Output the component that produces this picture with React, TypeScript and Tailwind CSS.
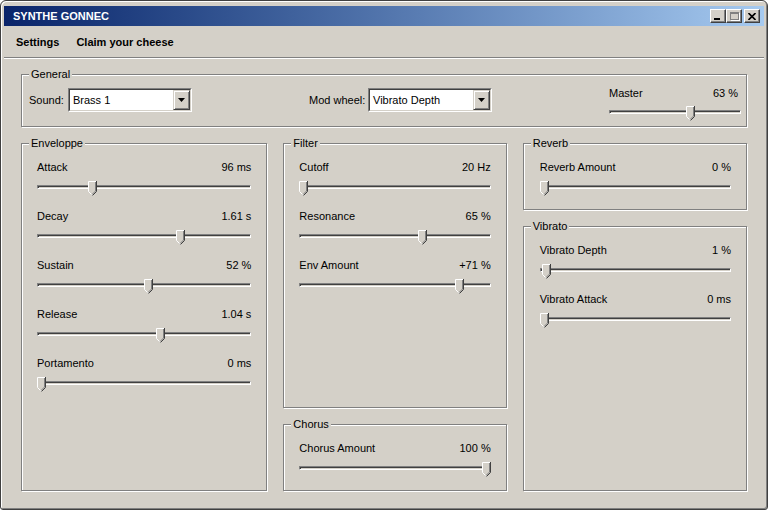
import type { ReactNode } from 'react';

// Win classic palette
const FONT = "font-['Liberation_Sans',Arial,sans-serif]";

type SliderProps = { value: number };

function Slider({ value }: SliderProps) {
  return (
    <div className="relative h-[15px]">
      {/* groove */}
      <div className="absolute left-0 right-0 top-[4px] h-[4px] border border-t-[#808080] border-l-[#808080] border-b-white border-r-white">
        <div className="h-full shadow-[inset_1px_1px_0_#404040]" />
      </div>
      {/* thumb */}
      <svg
        width="9"
        height="15"
        viewBox="0 0 9 15"
        className="absolute top-0"
        style={{ left: `calc((100% - 9px) * ${value})` }}
      >
        <path d="M0 0H9V10.5L4.5 15L0 10.5Z" fill="#d4d0c8" />
        <path d="M0.5 10.5V0.5H8" stroke="#ffffff" fill="none" />
        <path d="M0.5 10.5L4.5 14.5" stroke="#ffffff" fill="none" />
        <path d="M8.5 0V10.5L4.5 14.5" stroke="#404040" fill="none" />
        <path d="M7.5 1V10L4 13.5" stroke="#808080" fill="none" />
      </svg>
    </div>
  );
}

type RowProps = { label: string; text: string; value: number };

function SliderRow({ label, text, value }: RowProps) {
  return (
    <div>
      <div className="flex justify-between h-[13px] leading-[13px] text-[11px]">
        <span>{label}</span>
        <span>{text}</span>
      </div>
      <div className="mt-[7px]">
        <Slider value={value} />
      </div>
    </div>
  );
}

function GroupBox({ title, className, children }: { title: string; className: string; children?: ReactNode }) {
  return (
    <div className={`relative border border-[#808080] shadow-[inset_1px_1px_0_#ffffff,1px_1px_0_#ffffff] ${className}`}>
      <span className="absolute -top-[7px] left-[7px] bg-[#d4d0c8] px-[2px] text-[11px] leading-[13px]">
        {title}
      </span>
      {children}
    </div>
  );
}

function Combo({ value }: { value: string }) {
  return (
    <div className="w-[124px] h-[24px] border border-t-[#808080] border-l-[#808080] border-b-white border-r-white">
      <div className="h-full flex bg-white border border-t-[#404040] border-l-[#404040] border-b-[#d4d0c8] border-r-[#d4d0c8]">
        <span className="flex-1 pl-[3px] text-[11px] leading-[20px]">{value}</span>
        <div className="w-[17px] h-full bg-[#d4d0c8] border border-t-[#d4d0c8] border-l-[#d4d0c8] border-b-[#404040] border-r-[#404040] shadow-[inset_1px_1px_0_#ffffff,inset_-1px_-1px_0_#808080] flex items-center justify-center">
          <svg width="7" height="4" viewBox="0 0 7 4">
            <path d="M0 0H7L3.5 4Z" fill="#000000" />
          </svg>
        </div>
      </div>
    </div>
  );
}

function CapButton({ children, className }: { children: ReactNode; className: string }) {
  return (
    <div
      className={`w-[16px] h-[14px] bg-[#d4d0c8] border border-t-white border-l-white border-b-[#404040] border-r-[#404040] shadow-[inset_-1px_-1px_0_#808080] flex ${className}`}
    >
      {children}
    </div>
  );
}

const envelope = [
  { label: 'Attack', text: '96 ms', value: 0.25 },
  { label: 'Decay', text: '1.61 s', value: 0.675 },
  { label: 'Sustain', text: '52 %', value: 0.52 },
  { label: 'Release', text: '1.04 s', value: 0.58 },
  { label: 'Portamento', text: '0 ms', value: 0 },
];

const filter = [
  { label: 'Cutoff', text: '20 Hz', value: 0 },
  { label: 'Resonance', text: '65 %', value: 0.65 },
  { label: 'Env Amount', text: '+71 %', value: 0.855 },
];

const vibrato = [
  { label: 'Vibrato Depth', text: '1 %', value: 0.01 },
  { label: 'Vibrato Attack', text: '0 ms', value: 0 },
];

export default function App() {
  return (
    <div
      className={`w-[768px] h-[510px] bg-[#d4d0c8] text-black ${FONT} rounded-t-[6px] rounded-b-[3px] border border-[#404040] shadow-[inset_1px_1px_0_#ffffff,inset_-1px_-1px_0_#808080] pt-[5px] px-[3px] pb-[3px] flex flex-col overflow-hidden`}
    >
      {/* Title bar */}
      <div className="h-[20px] shrink-0 bg-gradient-to-r from-[#0a246a] to-[#a6caf0] flex items-center pl-[9px] pr-[4px]">
        <span className="flex-1 text-white font-bold text-[11px] leading-[13px]">SYNTHE GONNEC</span>
        <div className="flex">
          <CapButton className="items-end pl-[3px] pb-[2px]">
            <div className="w-[6px] h-[2px] bg-black" />
          </CapButton>
          <CapButton className="items-center justify-center">
            <div className="w-[9px] h-[8px] border border-t-2 border-[#808080] shadow-[1px_1px_0_#ffffff]" />
          </CapButton>
          <CapButton className="ml-[2px] items-center justify-center">
            <svg width="8" height="7" viewBox="0 0 8 7">
              <path d="M0.5 0L7.5 7M7.5 0L0.5 7" stroke="#000000" strokeWidth="1.6" />
            </svg>
          </CapButton>
        </div>
      </div>

      {/* Menu */}
      <div className="h-[32px] shrink-0 flex items-center gap-[17px] pl-[12px] pt-[2px] text-[11px] font-bold border-b border-[#808080] shadow-[0_1px_0_#ffffff]">
        <span>Settings</span>
        <span>Claim your cheese</span>
      </div>

      {/* Content */}
      <div className="flex-1 pt-[16px] px-[17px]">
        <GroupBox title="General" className="h-[53px] flex items-start pl-[7px]">
          <div className="w-[280px] mt-[13px] flex items-center">
            <span className="w-[39px] text-[11px] whitespace-nowrap">Sound:</span>
            <Combo value="Brass 1" />
          </div>
          <div className="w-[300px] mt-[13px] flex items-center">
            <span className="w-[59px] text-[11px] whitespace-nowrap">Mod wheel:</span>
            <Combo value="Vibrato Depth" />
          </div>
          <div className="w-[132px] mt-[12px]">
            <div className="flex justify-between h-[13px] leading-[13px] text-[11px] pr-[3px]">
              <span>Master</span>
              <span>63 %</span>
            </div>
            <div className="mt-[6px]">
              <Slider value={0.63} />
            </div>
          </div>
        </GroupBox>

        <div className="mt-[16px] flex">
          <GroupBox title="Enveloppe" className="w-[247px] h-[348px] pt-[17px] px-[15px] flex flex-col gap-[14px]">
            {envelope.map((r) => (
              <SliderRow key={r.label} {...r} />
            ))}
          </GroupBox>

          <div className="ml-[16px] w-[224px] flex flex-col gap-[16px]">
            <GroupBox title="Filter" className="h-[265px] pt-[17px] px-[15px] flex flex-col gap-[14px]">
              {filter.map((r) => (
                <SliderRow key={r.label} {...r} />
              ))}
            </GroupBox>
            <GroupBox title="Chorus" className="h-[67px] pt-[17px] px-[15px]">
              <SliderRow label="Chorus Amount" text="100 %" value={1} />
            </GroupBox>
          </div>

          <div className="ml-[16px] w-[225px] flex flex-col gap-[16px]">
            <GroupBox title="Reverb" className="h-[67px] pt-[17px] pl-[16px] pr-[15px]">
              <SliderRow label="Reverb Amount" text="0 %" value={0} />
            </GroupBox>
            <GroupBox title="Vibrato" className="h-[265px] pt-[17px] pl-[16px] pr-[15px] flex flex-col gap-[14px]">
              {vibrato.map((r) => (
                <SliderRow key={r.label} {...r} />
              ))}
            </GroupBox>
          </div>
        </div>
      </div>
    </div>
  );
}
